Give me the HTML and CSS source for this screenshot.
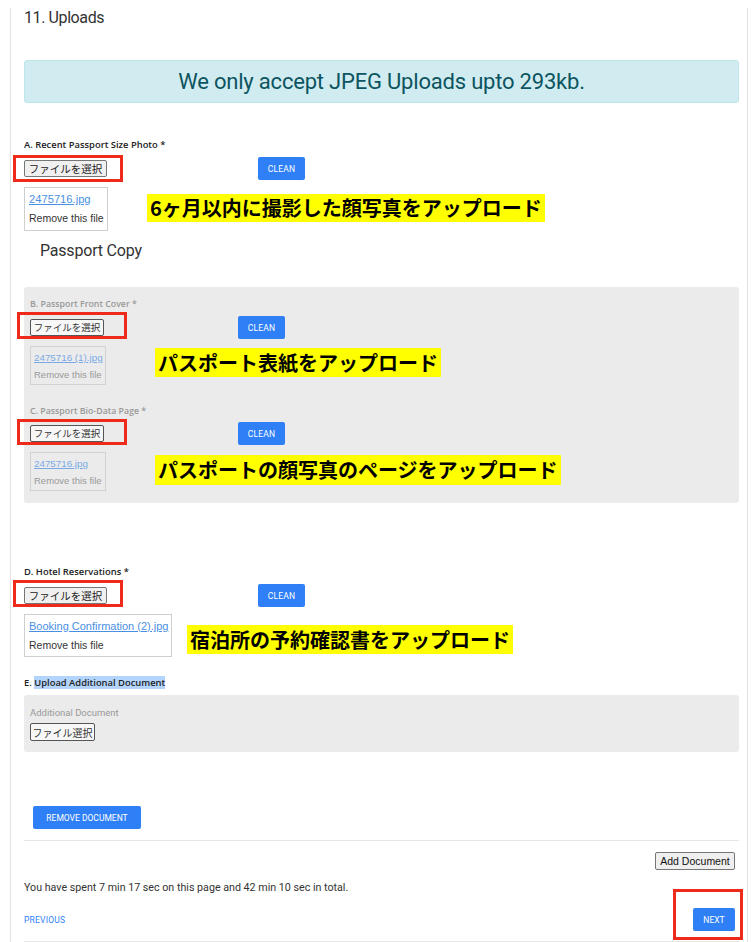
FILE: index.html
```html
<!DOCTYPE html>
<html lang="ja">
<head>
<meta charset="utf-8">
<title>Uploads</title>
<link rel="stylesheet" href="styles.css">
</head>
<body>
<div class="card">
  <div class="title">11. Uploads</div>
  <div class="alert">We only accept JPEG Uploads upto 293kb.</div>

  <div class="label label-a">A. Recent Passport Size Photo *</div>
  <div class="row1">
    <div class="pick-cell"><button class="file-btn">ファイルを選択</button></div>
    <button class="btn-blue btn-clean">CLEAN</button>
    <span class="redbox red-a"></span>
  </div>
  <div class="row2">
    <div class="file-box"><a class="file-link" href="#">2475716.jpg</a><div>Remove this file</div></div>
    <div class="note note-a">6ヶ月以内に撮影した顔写真をアップロード</div>
  </div>

  <div class="subhead">Passport Copy</div>

  <div class="panel panel-pass">
    <div class="label plabel">B. Passport Front Cover *</div>
    <div class="row1">
      <div class="pick-cell pcell"><button class="file-btn pbtn">ファイルを選択</button></div>
      <button class="btn-blue btn-clean">CLEAN</button>
      <span class="redbox red-b"></span>
    </div>
    <div class="row2">
      <div class="file-box pbox"><a class="file-link" href="#">2475716 (1).jpg</a><div>Remove this file</div></div>
      <div class="note note-b">パスポート表紙をアップロード</div>
    </div>

    <div class="label plabel plabel-c">C. Passport Bio-Data Page *</div>
    <div class="row1 row1-c">
      <div class="pick-cell pcell"><button class="file-btn pbtn">ファイルを選択</button></div>
      <button class="btn-blue btn-clean">CLEAN</button>
      <span class="redbox red-c"></span>
    </div>
    <div class="row2">
      <div class="file-box pbox"><a class="file-link" href="#">2475716.jpg</a><div>Remove this file</div></div>
      <div class="note note-c">パスポートの顔写真のページをアップロード</div>
    </div>
  </div>

  <div class="label label-d">D. Hotel Reservations *</div>
  <div class="row1">
    <div class="pick-cell"><button class="file-btn">ファイルを選択</button></div>
    <button class="btn-blue btn-clean">CLEAN</button>
    <span class="redbox red-d"></span>
  </div>
  <div class="row2">
    <div class="file-box box-d"><a class="file-link" href="#">Booking Confirmation (2).jpg</a><div>Remove this file</div></div>
    <div class="note note-d">宿泊所の予約確認書をアップロード</div>
  </div>

  <div class="label label-e">E. <span class="sel">Upload Additional Document</span></div>
  <div class="panel panel-add">
    <div class="add-label">Additional Document</div>
    <button class="file-btn pbtn add-btn">ファイル選択</button>
  </div>

  <button class="btn-blue btn-remove">REMOVE DOCUMENT</button>
  <div class="divider"></div>
  <div class="add-row"><button class="add-doc">Add Document</button></div>
  <div class="spent">You have spent 7 min 17 sec on this page and 42 min 10 sec in total.</div>
  <div class="nav-row">
    <a class="prev" href="#">PREVIOUS</a>
    <button class="btn-blue btn-next">NEXT<span class="redbox red-next"></span></button>
  </div>
</div>
</body>
</html>
```

FILE: styles.css
```css
html, body {
  margin: 0;
  padding: 0;
  background: #fff;
}
body {
  font-family: Roboto, "Liberation Sans", Arial, sans-serif;
  color: #333;
}
.card {
  margin-left: 10px;
  width: 715px;
  border-left: 1px solid #e2e2e2;
  border-right: 1px solid #e2e2e2;
  padding: 0 8px 0 13px;
  min-height: 942px;
  box-sizing: content-box;
}
.title {
  margin-top: 8px;
  font-size: 16px;
  line-height: 20px;
  letter-spacing: -0.4px;
  color: #333;
}
.alert {
  margin-top: 32px;
  height: 41px;
  line-height: 41px;
  background: #d1ecf1;
  border: 1px solid #bee5eb;
  border-radius: 3px;
  color: #0c5460;
  text-align: center;
  font-size: 22px;
  letter-spacing: -0.2px;
}
.label {
  font-family: "Open Sans", "Liberation Sans", Arial, sans-serif;
  font-size: 9.4px;
  font-weight: 600;
  line-height: 12px;
  color: #222;
}
.label-a { margin-top: 36px; }
.row1 {
  position: relative;
  display: flex;
  align-items: center;
  height: 23px;
  margin-top: 6px;
}
.pick-cell { width: 234px; display: flex; align-items: center; }
.pcell { width: 208px; }
.file-btn {
  font-family: "Noto Sans CJK JP", sans-serif;
  font-size: 10.5px;
  height: 17px;
  width: 83px;
  padding: 0;
  line-height: 15px;
  background: #f0f0f0;
  border: 1px solid #767676;
  border-radius: 2px;
  color: #222;
}
.pbtn {
  width: 74px;
  font-size: 9.5px;
  border-color: #555;
  background: #f7f7f7;
  color: #333;
}
.btn-blue {
  font-family: Roboto, "Liberation Sans", Arial, sans-serif;
  background: #2f7ff6;
  color: #fff;
  border: none;
  border-radius: 2px;
  font-weight: 400;
  padding: 0;
}
.btn-clean {
  width: 47px;
  height: 23px;
  font-size: 8.5px;
  letter-spacing: 0.2px;
}
.redbox {
  position: absolute;
  border: 3px solid #ee2a1a;
  box-sizing: border-box;
  pointer-events: none;
}
.red-a { left: -11px; top: -2px; width: 110px; height: 27px; }
.red-b { left: -13px; top: -4px; width: 110px; height: 27px; }
.red-c { left: -13px; top: -3px; width: 110px; height: 26px; }
.red-d { left: -11px; top: -4px; width: 110px; height: 27px; }
.row2 {
  display: flex;
  align-items: flex-start;
  margin-top: 7px;
}
.file-box {
  width: 84px;
  height: 44px;
  box-sizing: border-box;
  border: 1px solid #cfcfcf;
  padding: 2px 0 0 4px;
  font-family: "Liberation Sans", Arial, sans-serif;
  font-size: 10.5px;
  line-height: 19px;
  color: #333;
  white-space: nowrap;
}
.file-link { color: #4a90e2; text-decoration: underline; font-size: 11.2px; }
.box-d .file-link { font-size: 11px; }
.note {
  font-family: "Noto Sans CJK JP", sans-serif;
  font-weight: bold;
  font-size: 20px;
  line-height: 28px;
  height: 28px;
  background: #ffff00;
  color: #000;
  padding: 0 3px;
  white-space: nowrap;
}
.note-a { margin-left: 39px; margin-top: 7px; }
.subhead {
  margin-top: 10px;
  margin-left: 16px;
  font-size: 16px;
  line-height: 20px;
  letter-spacing: -0.2px;
  color: #333;
}
.panel {
  background: #ebebeb;
  border-radius: 3px;
  padding-left: 6px;
}
.panel-pass {
  margin-top: 26px;
  padding-top: 11px;
  padding-bottom: 12px;
}
.plabel { color: #999; font-size: 8.8px; }
.plabel-c { margin-top: 20px; }
.row1-c { margin-top: 5px; }
.pbox {
  width: 76px;
  height: 39px;
  border-color: #d2d2d2;
  font-size: 9.5px;
  line-height: 17px;
  padding-top: 2px;
  padding-left: 3px;
  color: #999;
}
.pbox .file-link { color: #7aaae6; font-size: 9.8px; }
.note-b { margin-left: 49px; margin-top: 2px; height: 29px; line-height: 29px; }
.note-c { margin-left: 49px; margin-top: 3px; height: 30px; line-height: 30px; }
.label-d { margin-top: 63px; }
.box-d { width: 148px; height: 43px; }
.note-d { margin-left: 15px; margin-top: 11px; height: 29px; line-height: 29px; }
.label-e { margin-top: 20px; }
.sel { background: #b3d4fc; }
.panel-add {
  margin-top: 6px;
  padding-top: 12px;
  padding-bottom: 11px;
}
.add-label {
  font-size: 9.5px;
  line-height: 12px;
  color: #999;
}
.add-btn {
  display: block;
  margin-top: 4px;
  width: 65px;
  height: 18px;
  font-size: 10px;
}
.btn-remove {
  display: block;
  margin-top: 54px;
  margin-left: 9px;
  width: 108px;
  height: 23px;
  font-size: 8.5px;
}
.divider {
  margin-top: 11px;
  height: 1px;
  background: #e6e6e6;
}
.add-row {
  margin-top: 11px;
  display: flex;
  justify-content: flex-end;
  padding-right: 4px;
}
.add-doc {
  font-family: "Liberation Sans", Arial, sans-serif;
  font-size: 10.5px;
  height: 18px;
  width: 80px;
  padding: 0;
  background: #efefef;
  border: 1px solid #767676;
  border-radius: 2px;
  color: #111;
}
.spent {
  margin-top: 11px;
  font-family: Roboto, "Liberation Sans", Arial, sans-serif;
  font-size: 10.7px;
  line-height: 14px;
  color: #333;
}
.nav-row {
  margin-top: 13px;
  display: flex;
  justify-content: space-between;
  align-items: center;
  padding-right: 4px;
  padding-bottom: 10px;
  border-bottom: 1px solid #e6e6e6;
}
.prev {
  font-size: 8.5px;
  color: #2f7ff6;
  text-decoration: none;
  letter-spacing: 0.2px;
}
.btn-next {
  position: relative;
  width: 42px;
  height: 23px;
  font-size: 8.5px;
}
.red-next { left: -20px; top: -19px; width: 70px; height: 51px; }
```
